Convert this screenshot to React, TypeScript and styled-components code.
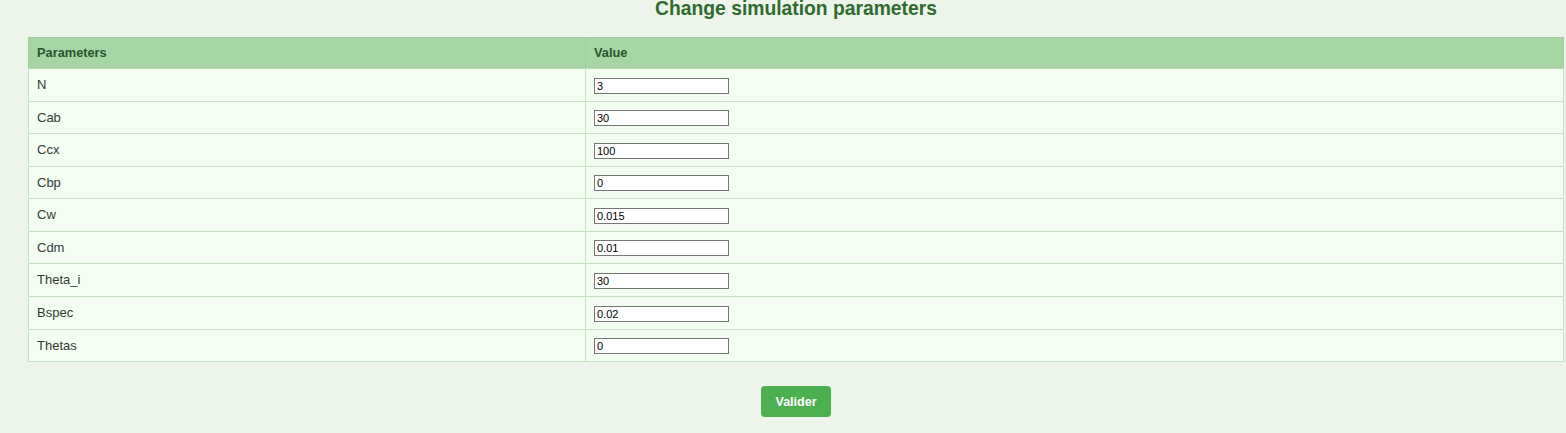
import React from "react";
import styled, { createGlobalStyle } from "styled-components";

const GlobalStyle = createGlobalStyle`
  html, body {
    margin: 0;
    padding: 0;
    background: #edf5ea;
    font-family: "Liberation Sans", Arial, sans-serif;
  }
`;

const Page = styled.div`
  width: 1536px;
  margin-left: 28px;
  display: flex;
  flex-direction: column;
  align-items: center;
`;

const Title = styled.h3`
  margin: -2px 0 17px;
  font-size: 19.3px;
  line-height: 21.5px;
  font-weight: bold;
  color: #2e6b2e;
`;

const Table = styled.table`
  width: 100%;
  border-collapse: collapse;
  background: #f4fdf2;
  border: 1px solid #c6e2c3;
`;

const HeadCell = styled.th<{ $w?: number }>`
  background: #a8d5a6;
  color: #2a552a;
  font-size: 12.8px;
  font-weight: bold;
  text-align: left;
  padding: 8px 8px;
  line-height: 14.5px;
  border: 1px solid #a0cd9e;
  border-bottom-color: #b7dcb5;
  ${(p) => (p.$w ? `width: ${p.$w}px;` : "")}
`;

const Cell = styled.td`
  padding: 0 8px;
  line-height: 31.56px;
  font-size: 13px;
  color: #333a33;
  border: 1px solid #c6e2c3;
  vertical-align: middle;
`;

const Input = styled.input`
  box-sizing: border-box;
  display: inline-block;
  vertical-align: middle;
  width: 135px;
  height: 16px;
  margin: 0;
  padding: 0 2px;
  border: 1px solid #767676;
  background: #fff;
  font-family: "Liberation Sans", Arial, sans-serif;
  font-size: 11px;
  line-height: 14px;
  color: #000;
`;

const Button = styled.button`
  margin-top: 24px;
  width: 70px;
  height: 31px;
  border: none;
  border-radius: 4px;
  background: #4caf50;
  color: #fff;
  font-family: "Liberation Sans", Arial, sans-serif;
  font-size: 12.5px;
  font-weight: bold;
  cursor: pointer;
`;

const params: [string, string][] = [
  ["N", "3"],
  ["Cab", "30"],
  ["Ccx", "100"],
  ["Cbp", "0"],
  ["Cw", "0.015"],
  ["Cdm", "0.01"],
  ["Theta_i", "30"],
  ["Bspec", "0.02"],
  ["Thetas", "0"],
];

export default function App() {
  return (
    <>
      <GlobalStyle />
      <Page>
        <Title>Change simulation parameters</Title>
        <Table>
          <thead>
            <tr>
              <HeadCell $w={540}>Parameters</HeadCell>
              <HeadCell>Value</HeadCell>
            </tr>
          </thead>
          <tbody>
            {params.map(([name, value]) => (
              <tr key={name}>
                <Cell>{name}</Cell>
                <Cell>
                  <Input type="text" defaultValue={value} />
                </Cell>
              </tr>
            ))}
          </tbody>
        </Table>
        <Button type="button">Valider</Button>
      </Page>
    </>
  );
}
